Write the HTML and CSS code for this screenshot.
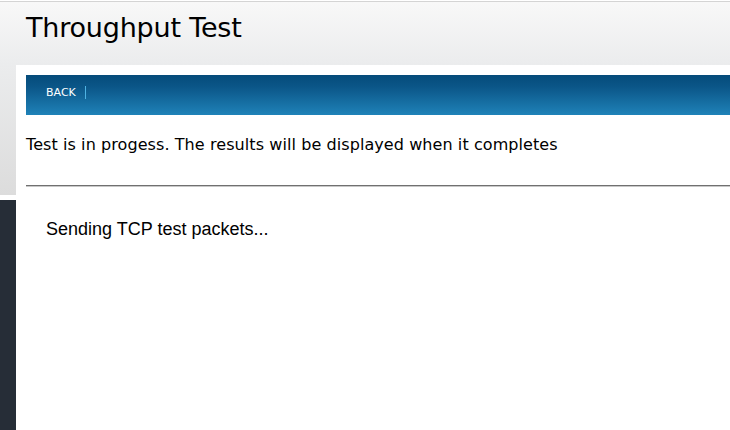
FILE: index.html
```html
<!DOCTYPE html>
<html>
<head>
<meta charset="utf-8">
<link rel="stylesheet" href="styles.css">
</head>
<body>
<header class="header">
  <h1 class="title">Throughput Test</h1>
</header>
<main class="panel">
  <nav class="toolbar">
    <a class="tool-link" href="#">BACK</a>
    <span class="tool-sep"></span>
  </nav>
  <p class="status">Test is in progess. The results will be displayed when it completes</p>
  <hr class="rule">
  <p class="progress">Sending TCP test packets...</p>
</main>
</body>
</html>
```
FILE: styles.css
```css
html, body {
  margin: 0;
  padding: 0;
  height: 100%;
}
body {
  background: linear-gradient(to bottom,
    #ffffff 0px, #ffffff 1px,
    #d4d4d4 1px, #d4d4d4 2px,
    #f8f8f8 2px, #ebeced 65px, #dcdcdc 195px,
    #ffffff 195px, #ffffff 200px,
    #262d37 200px, #262d37 100%);
  overflow: hidden;
  font-family: "DejaVu Sans", Verdana, sans-serif;
}
.header {
  height: 65px;
  box-sizing: border-box;
  padding-top: 2px;
}
.title {
  margin: 0;
  padding-left: 26px;
  font-family: "DejaVu Sans", Tahoma, sans-serif;
  font-weight: normal;
  font-size: 27px;
  line-height: 52px;
  letter-spacing: -0.2px;
  color: #000;
}
.panel {
  margin-left: 16px;
  background: #fff;
  height: 365px;
  padding: 10px 0 0 10px;
  box-sizing: border-box;
}
.toolbar {
  height: 40px;
  box-sizing: border-box;
  padding-bottom: 6px;
  background: linear-gradient(to bottom, #054b7a 0%, #0b5688 30%, #1f82b8 100%);
  display: flex;
  align-items: center;
  padding-left: 20px;
}
.tool-link {
  color: #fff;
  text-decoration: none;
  font-size: 11px;
  font-family: "DejaVu Sans", Verdana, sans-serif;
  padding-right: 9px;
}
.tool-sep {
  width: 1px;
  height: 13px;
  background: #4fb3e3;
}
.status {
  margin: 19px 0 0 0;
  font-size: 16px;
  line-height: 22px;
  letter-spacing: 0.08px;
  color: #000;
}
.rule {
  margin: 29px 0 0 0;
  border: 0;
  height: 2px;
  background: linear-gradient(to bottom, #707070 0, #707070 1px, #c8c8c8 1px);
}
.progress {
  margin: 32px 0 0 20px;
  font-family: "Liberation Sans", Arial, sans-serif;
  font-size: 18px;
  color: #000;
}
```
